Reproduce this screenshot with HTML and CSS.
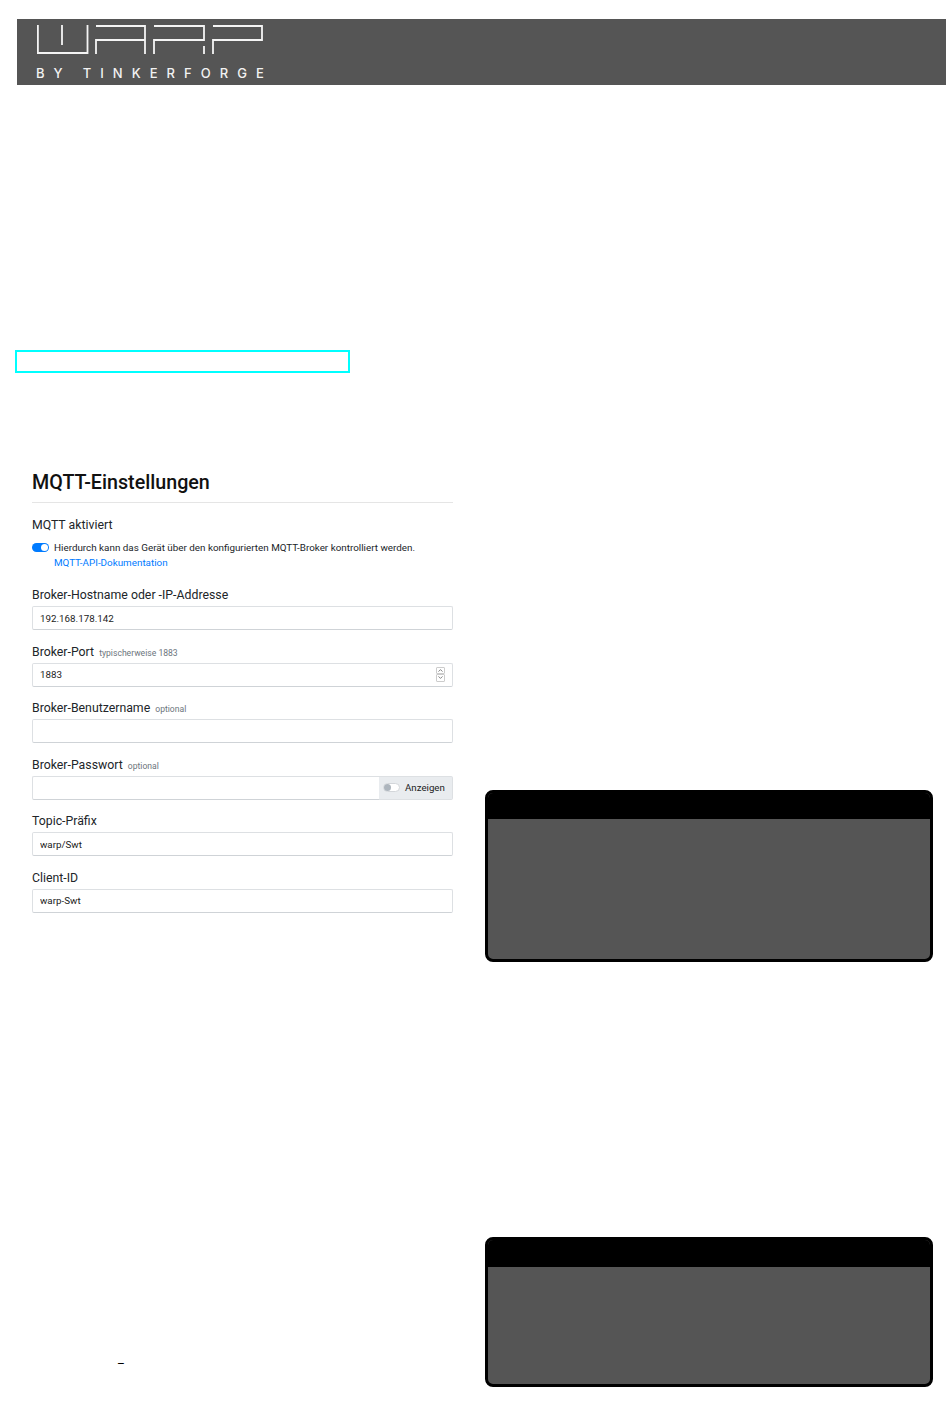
FILE: index.html
```html
<!DOCTYPE html>
<html lang="de">
<head>
  <meta charset="UTF-8">
  <title>WARP - MQTT-Einstellungen</title>
  <meta name="viewport" content="width=device-width, initial-scale=1.0">
  <link rel="stylesheet" href="styles.css">
</head>
<body>
  <header class="topbar">
    <svg class="logo-mark" width="240" height="38" viewBox="0 0 240 38" fill="none" stroke="#f4f4f4" stroke-width="1.8">
      <!-- W -->
      <path d="M0.9 0V28H50.5V0M25 0V20"/>
      <!-- A -->
      <path d="M59 29V15H108M59 1H108V29"/>
      <!-- R -->
      <path d="M117 29V15H167V1H117M167 21V29"/>
      <!-- P -->
      <path d="M176 29V15H225V1H176"/>
    </svg>
    <div class="logo-text"><span class="logo-by">BY</span>TINKERFORGE</div>
  </header>

  <div class="focus-box"></div>

  <main class="columns">
    <section class="settings">
      <h2>MQTT-Einstellungen</h2>

      <div class="field field-switch">
        <div class="label">MQTT aktiviert</div>
        <div class="switch-row">
          <span class="switch on"></span>
          <div class="switch-text">
            <div>Hierdurch kann das Gerät über den konfigurierten MQTT-Broker kontrolliert werden.</div>
            <a href="#">MQTT-API-Dokumentation</a>
          </div>
        </div>
      </div>

      <div class="field">
        <label class="label" for="host">Broker-Hostname oder -IP-Addresse</label>
        <input type="text" id="host" value="192.168.178.142">
      </div>

      <div class="field">
        <label class="label" for="port">Broker-Port <small>typischerweise 1883</small></label>
        <div class="number-wrap">
          <input type="text" id="port" value="1883">
          <div class="spinner">
            <span class="spin-btn"><svg width="5" height="3" viewBox="0 0 5 3" fill="none" stroke="#666" stroke-width="0.8"><path d="M0.5 2.6L2.5 0.6L4.5 2.6"/></svg></span>
            <span class="spin-btn"><svg width="5" height="3" viewBox="0 0 5 3" fill="none" stroke="#666" stroke-width="0.8"><path d="M0.5 0.4L2.5 2.4L4.5 0.4"/></svg></span>
          </div>
        </div>
      </div>

      <div class="field">
        <label class="label" for="user">Broker-Benutzername <small>optional</small></label>
        <input type="text" id="user">
      </div>

      <div class="field">
        <label class="label" for="pass">Broker-Passwort <small>optional</small></label>
        <div class="input-group">
          <input type="password" id="pass">
          <div class="addon"><span class="switch off"></span>Anzeigen</div>
        </div>
      </div>

      <div class="field">
        <label class="label" for="topic">Topic-Präfix</label>
        <input type="text" id="topic" value="warp/Swt">
      </div>

      <div class="field">
        <label class="label" for="client">Client-ID</label>
        <input type="text" id="client" value="warp-Swt">
      </div>

      <div class="stray">–</div>
    </section>

    <aside class="side">
      <div class="panel panel-first"><div class="panel-head"></div></div>
      <div class="panel panel-second"><div class="panel-head"></div></div>
    </aside>
  </main>
</body>
</html>
```

FILE: styles.css
```css
body {
  font-family: Roboto, "Liberation Sans", sans-serif;
  margin: 0;
  padding: 0;
  background: #fff;
  color: #212529;
}

.topbar {
  margin: 19px 4px 0 17px;
  height: 66px;
  background: #555;
  padding: 6px 0 0 20px;
  box-sizing: border-box;
}

.logo-mark {
  display: block;
}

.logo-text {
  font-family: Inter, sans-serif;
  font-size: 13px;
  font-weight: 500;
  line-height: 14px;
  letter-spacing: 9.05px;
  color: #f2f2f2;
  margin: 3px 0 0 -1px;
  white-space: nowrap;
}

.logo-by {
  margin-right: 11px;
}

.focus-box {
  width: 335px;
  height: 23px;
  box-sizing: border-box;
  border: 2px solid #0ff;
  margin: 265px 0 0 15px;
}

.columns {
  display: grid;
  grid-template-columns: 421px 448px;
  column-gap: 32px;
  padding-left: 32px;
}

.settings {
  padding-top: 98px;
}

h2 {
  font-size: 19.7px;
  font-weight: 500;
  line-height: 24px;
  margin: 0;
  padding-bottom: 7px;
  border-bottom: 1px solid #e5e5e5;
  color: #111;
}

.field {
  margin-top: 13.6px;
}

.field-switch {
  margin-top: 14px;
}

.label {
  display: block;
  height: 15px;
  padding-top: 1px;
  font-size: 12.3px;
  line-height: 15px;
  margin-bottom: 3px;
  color: #212529;
}

small {
  font-size: 8.6px;
  line-height: 1;
  color: #6c757d;
  margin-left: 2px;
}

input {
  display: block;
  width: 100%;
  height: 24px;
  box-sizing: border-box;
  border: 1px solid #dde0e3;
  border-bottom-color: #cfd3d7;
  border-radius: 2px;
  padding: 0 7px;
  font-family: inherit;
  font-size: 9.8px;
  color: #222;
  background: #fff;
}

.switch-row {
  display: flex;
  margin-top: 7px;
}

.switch {
  display: block;
  flex: none;
  position: relative;
  width: 17px;
  height: 9px;
  border-radius: 5px;
  box-sizing: border-box;
}

.switch::after {
  content: "";
  position: absolute;
  top: 1px;
  width: 7px;
  height: 7px;
  border-radius: 50%;
}

.switch.on {
  background: #007bff;
  margin-top: 3px;
}

.switch.on::after {
  right: 1px;
  background: #fff;
}

.switch.off {
  background: #fff;
  border: 1px solid #d3d6da;
  margin-right: 5px;
}

.switch.off::after {
  left: 0;
  top: 0;
  background: #adb5bd;
}

.switch-text {
  margin-left: 5px;
  font-size: 9.85px;
  line-height: 15px;
  color: #212529;
  white-space: nowrap;
}

.switch-text a {
  color: #007bff;
  text-decoration: none;
}

.field-switch + .field {
  margin-top: 17px;
}

.number-wrap {
  position: relative;
}

.spinner {
  position: absolute;
  top: 4px;
  right: 8px;
  width: 9px;
  display: flex;
  flex-direction: column;
}

.spin-btn {
  display: flex;
  align-items: center;
  justify-content: center;
  height: 7.5px;
  box-sizing: border-box;
  border: 1px solid #ccc;
  border-radius: 1px;
}

.input-group {
  display: flex;
}

.input-group input {
  flex: 1;
  min-width: 0;
  border-right: 0;
  border-radius: 2px 0 0 2px;
}

.addon {
  display: flex;
  align-items: center;
  width: 74px;
  box-sizing: border-box;
  padding-left: 4px;
  background: #e9ecef;
  border: 1px solid #dde0e3;
  border-left: 0;
  border-radius: 0 2px 2px 0;
  font-size: 9.7px;
  color: #222;
}

.stray {
  font-size: 12px;
  line-height: 12px;
  margin: 445px 0 0 85px;
  color: #000;
}

.side {
  display: flex;
  flex-direction: column;
}

.panel {
  box-sizing: border-box;
  border: 3px solid #000;
  border-radius: 8px;
  background: #555;
  overflow: hidden;
}

.panel-head {
  height: 27px;
  background: #000;
}

.panel-first {
  height: 172px;
  margin-top: 417px;
}

.panel-first .panel-head {
  height: 26px;
}

.panel-second {
  height: 150px;
  margin-top: 275px;
}
```
